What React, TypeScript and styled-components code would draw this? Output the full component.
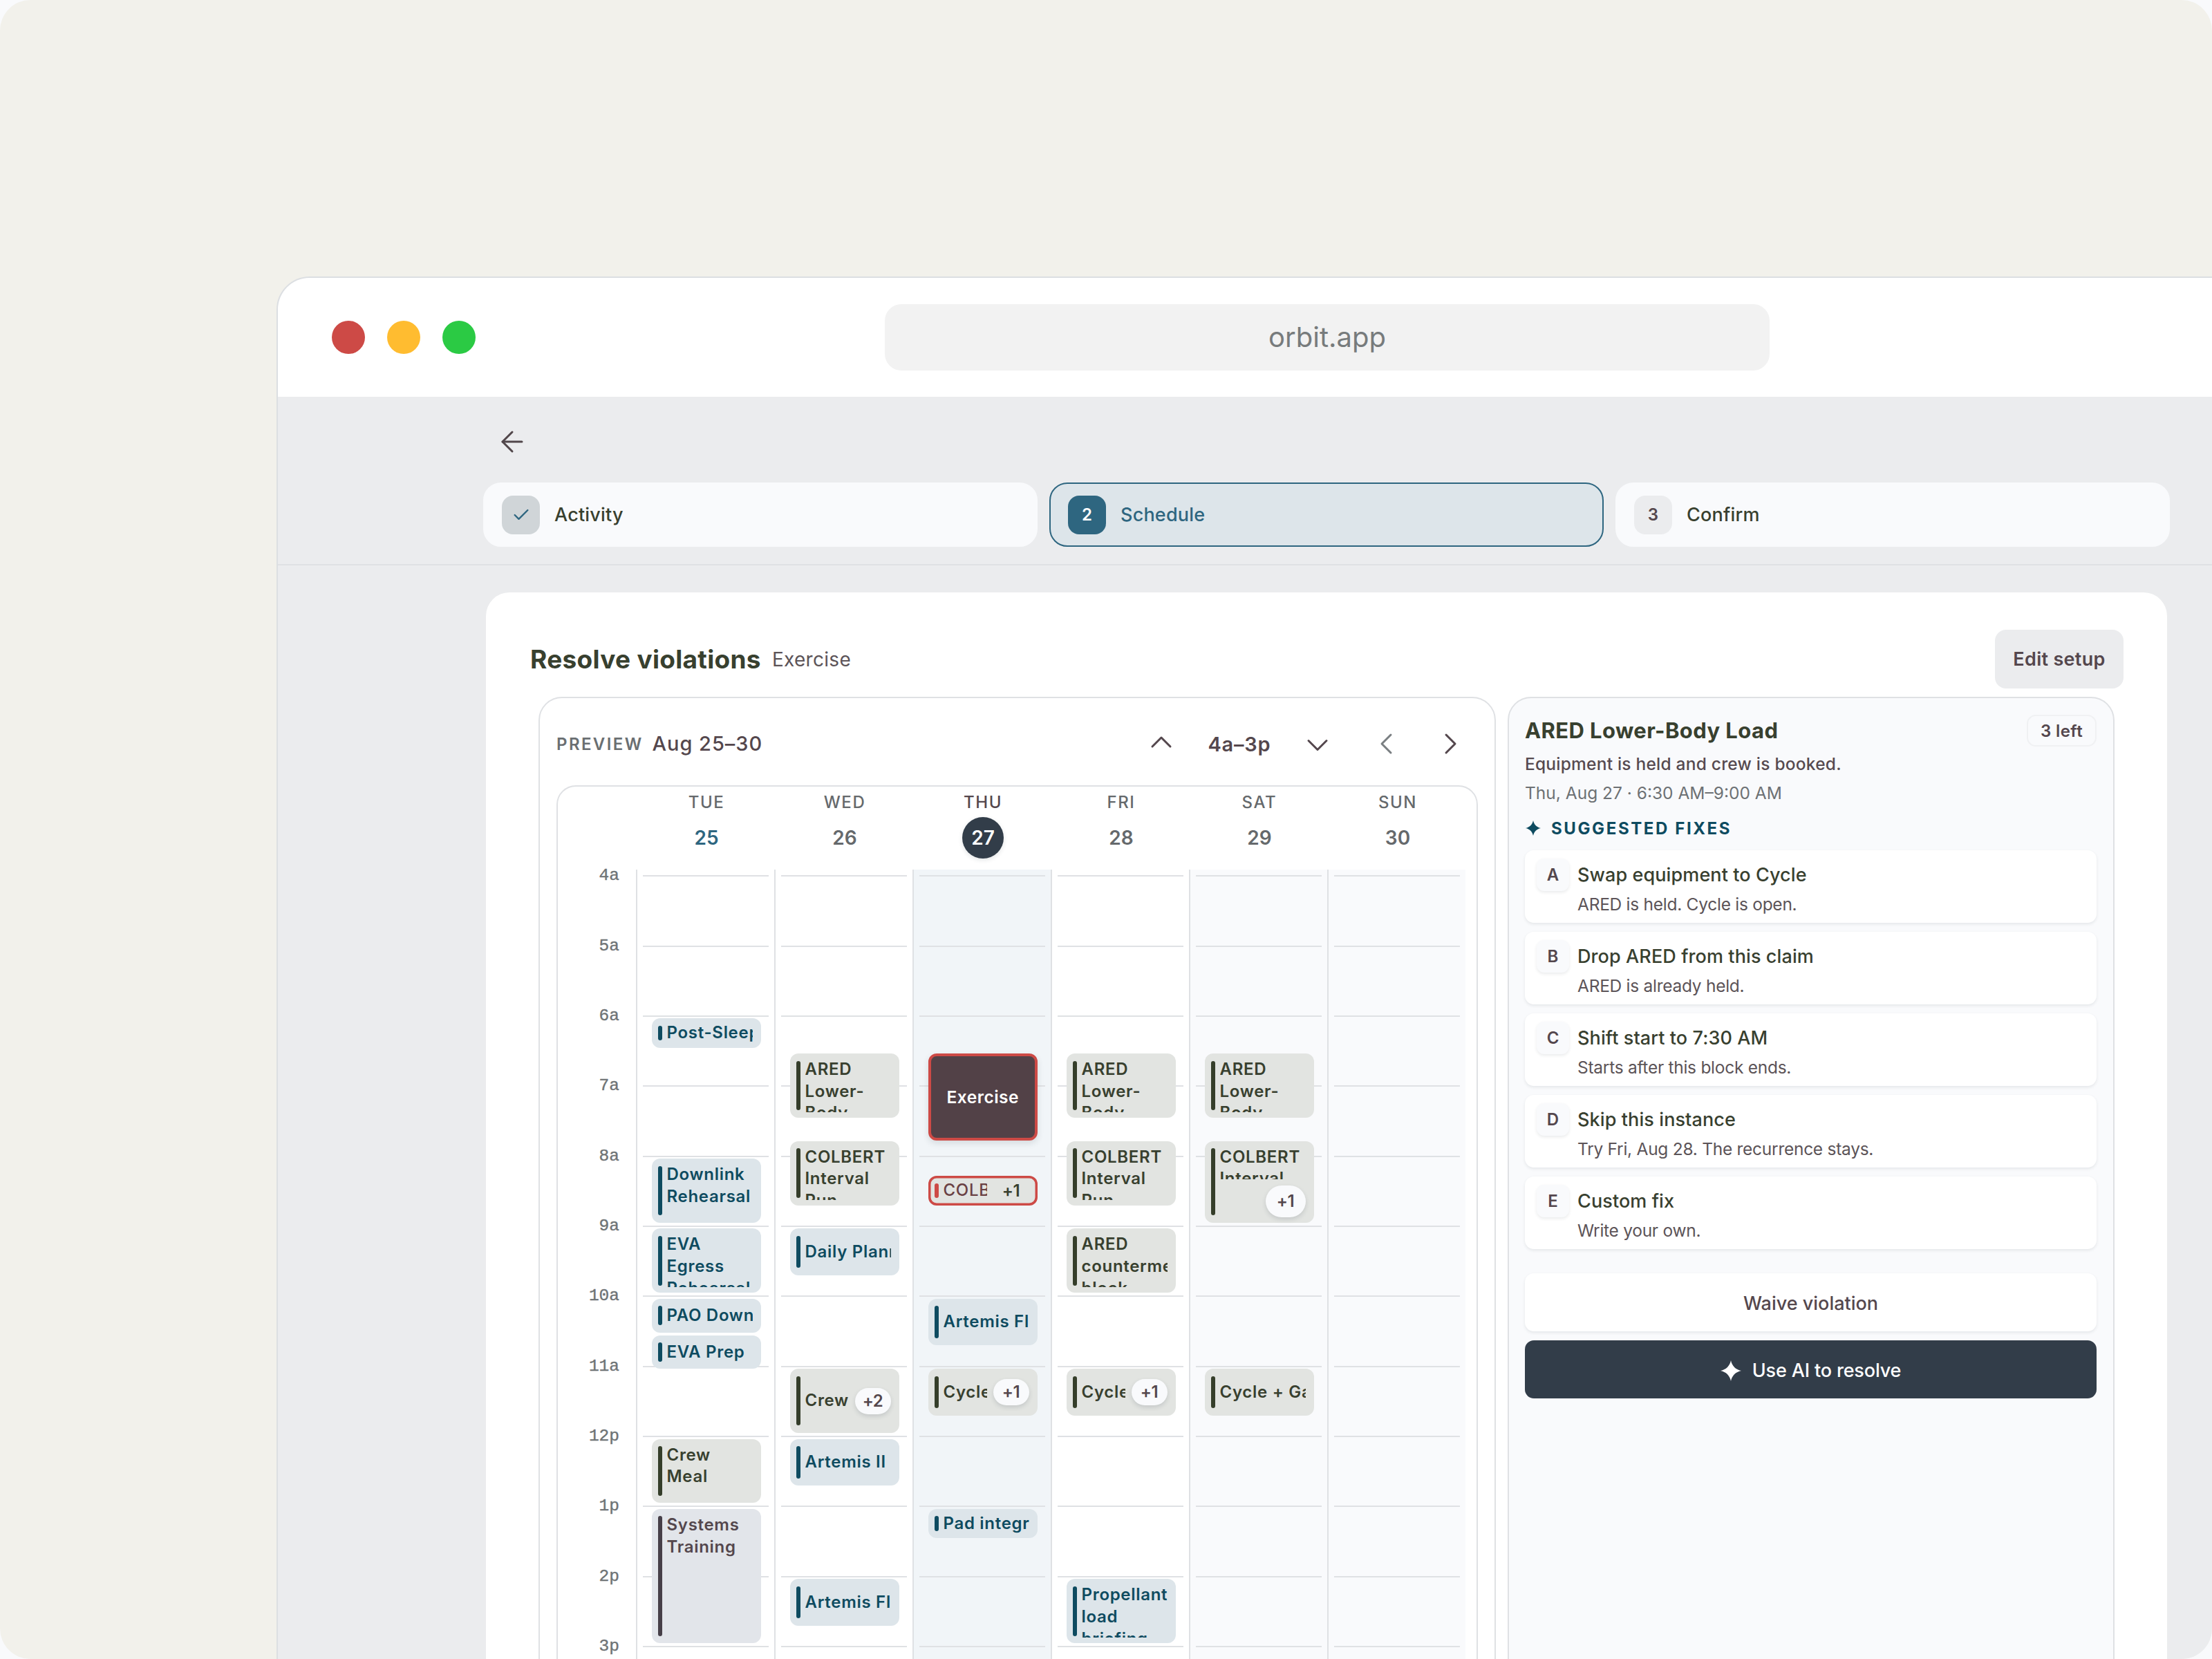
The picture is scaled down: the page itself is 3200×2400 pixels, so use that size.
import { ArrowLeft, Check } from 'lucide-react';
import styled, { createGlobalStyle, css } from 'styled-components';

type Tone = 'blue' | 'green' | 'slate';

interface CalendarEvent {
  title: string;
  start: number;
  duration: number;
  tone: Tone;
  more?: string;
  conflict?: boolean;
  draft?: boolean;
}

interface Day {
  name: string;
  date: number;
  kind?: 'past' | 'active' | 'weekend';
  events: CalendarEvent[];
}

const HOUR_HEIGHT = 101.35;
const FIRST_HOUR = 4;
const GRID_OFFSET = 9.3;

const tones = {
  blue: { bg: '#dde5ea', text: '#0e4b60', bar: '#0e4b60' },
  green: { bg: '#e2e4e1', text: '#38402f', bar: '#353e2a' },
  slate: { bg: '#e2e5ea', text: '#54474d', bar: '#463f48' },
};

const hours = ['4a', '5a', '6a', '7a', '8a', '9a', '10a', '11a', '12p', '1p', '2p', '3p'];

const days: Day[] = [
  {
    name: 'TUE',
    date: 25,
    kind: 'past',
    events: [
      { title: 'Post-Sleep', start: 6, duration: 0.5, tone: 'blue' },
      { title: 'Downlink Rehearsal', start: 8, duration: 1, tone: 'blue' },
      { title: 'EVA Egress Rehearsal', start: 9, duration: 1, tone: 'blue' },
      { title: 'PAO Downlink', start: 10, duration: 0.565, tone: 'blue' },
      { title: 'EVA Prep', start: 10.52, duration: 0.565, tone: 'blue' },
      { title: 'Crew Meal', start: 12, duration: 1, tone: 'green' },
      { title: 'Systems Training', start: 13, duration: 2, tone: 'slate' },
    ],
  },
  {
    name: 'WED',
    date: 26,
    events: [
      { title: 'ARED Lower-Body', start: 6.5, duration: 1, tone: 'green' },
      { title: 'COLBERT Interval Run', start: 7.75, duration: 1, tone: 'green' },
      { title: 'Daily Planning', start: 9, duration: 0.75, tone: 'blue' },
      { title: 'Crew Meal', start: 11, duration: 1, tone: 'green', more: '+2' },
      { title: 'Artemis II', start: 12, duration: 0.75, tone: 'blue' },
      { title: 'Artemis Flight', start: 14, duration: 0.75, tone: 'blue' },
    ],
  },
  {
    name: 'THU',
    date: 27,
    kind: 'active',
    events: [
      { title: 'Exercise', start: 6.5, duration: 1.33, tone: 'slate', draft: true },
      { title: 'COLBERT', start: 8.25, duration: 0.5, tone: 'green', more: '+1', conflict: true },
      { title: 'Artemis Flight', start: 10, duration: 0.75, tone: 'blue' },
      { title: 'Cycle + Gaze', start: 11, duration: 0.75, tone: 'green', more: '+1' },
      { title: 'Pad integration', start: 13, duration: 0.5, tone: 'blue' },
    ],
  },
  {
    name: 'FRI',
    date: 28,
    events: [
      { title: 'ARED Lower-Body', start: 6.5, duration: 1, tone: 'green' },
      { title: 'COLBERT Interval Run', start: 7.75, duration: 1, tone: 'green' },
      { title: 'ARED countermeasure block', start: 9, duration: 1, tone: 'green' },
      { title: 'Cycle + Gaze', start: 11, duration: 0.75, tone: 'green', more: '+1' },
      { title: 'Propellant load briefing', start: 14, duration: 1, tone: 'blue' },
    ],
  },
  {
    name: 'SAT',
    date: 29,
    kind: 'weekend',
    events: [
      { title: 'ARED Lower-Body', start: 6.5, duration: 1, tone: 'green' },
      { title: 'COLBERT Interval', start: 7.75, duration: 1.25, tone: 'green', more: '+1' },
      { title: 'Cycle + Gaze', start: 11, duration: 0.75, tone: 'green' },
    ],
  },
  { name: 'SUN', date: 30, kind: 'weekend', events: [] },
];

const fixes = [
  { id: 'A', title: 'Swap equipment to Cycle', detail: 'ARED is held. Cycle is open.' },
  { id: 'B', title: 'Drop ARED from this claim', detail: 'ARED is already held.' },
  { id: 'C', title: 'Shift start to 7:30 AM', detail: 'Starts after this block ends.' },
  { id: 'D', title: 'Skip this instance', detail: 'Try Fri, Aug 28. The recurrence stays.' },
  { id: 'E', title: 'Custom fix', detail: 'Write your own.' },
];

const chevrons = {
  up: 'M13 30 L26 17 L39 30',
  down: 'M13 21.5 L26 34.5 L39 21.5',
  left: 'M32 13 L19 26 L32 39',
  right: 'M20 13 L33 26 L20 39',
};

const Chevron = ({ direction }: { direction: keyof typeof chevrons }) => (
  <svg width={52} height={52} viewBox="0 0 52 52" fill="none">
    <path
      d={chevrons[direction]}
      stroke="currentColor"
      strokeWidth={3}
      strokeLinecap="round"
      strokeLinejoin="round"
    />
  </svg>
);

const Sparkle = ({ size }: { size: number }) => (
  <svg width={size} height={size} viewBox="0 0 30 30" fill="currentColor">
    <path d="M15 0 C16.6 8 22 13.4 30 15 C22 16.6 16.6 22 15 30 C13.4 22 8 16.6 0 15 C8 13.4 13.4 8 15 0 Z" />
  </svg>
);

const EventBlock = ({ event }: { event: CalendarEvent }) => {
  const position = {
    top: GRID_OFFSET + 3.4 + (event.start - FIRST_HOUR) * HOUR_HEIGHT,
    height: event.duration * HOUR_HEIGHT - 8.5,
  };

  if (event.draft) return <DraftEvent style={position}>{event.title}</DraftEvent>;

  const stacked = !!event.more && event.duration > 1;
  const wrap = event.duration >= 1 && (!event.more || stacked);

  return (
    <EventCard style={position} $tone={event.tone} $conflict={event.conflict}>
      <EventBar $tone={event.tone} $conflict={event.conflict} />
      <EventBody $stacked={stacked}>
        <EventTitle $wrap={wrap}>{event.title}</EventTitle>
        {event.more && (
          <MorePill $large={stacked} $flat={event.conflict}>
            {event.more}
          </MorePill>
        )}
      </EventBody>
    </EventCard>
  );
};

const App = () => (
  <>
    <GlobalStyle />
    <Backdrop>
      <BrowserWindow>
        <TitleBar>
          <TrafficLights>
            <Light $color="#cd4a46" />
            <Light $color="#ffbc30" />
            <Light $color="#2bca44" />
          </TrafficLights>
          <AddressBar>orbit.app</AddressBar>
        </TitleBar>

        <StepsHeader>
          <BackButton>
            <ArrowLeft size={48} strokeWidth={1.5} />
          </BackButton>
          <Steps>
            <Step>
              <StepBadge $state="done">
                <Check size={28} strokeWidth={2} />
              </StepBadge>
              Activity
            </Step>
            <Step $current>
              <StepBadge $state="current">2</StepBadge>
              Schedule
            </Step>
            <Step>
              <StepBadge>3</StepBadge>
              Confirm
            </Step>
          </Steps>
        </StepsHeader>

        <Card>
          <CardHeader>
            <CardTitle>Resolve violations</CardTitle>
            <CardSubtitle>Exercise</CardSubtitle>
            <EditButton>Edit setup</EditButton>
          </CardHeader>
          <Panels>
            <PreviewPanel>
              <Toolbar>
                <PreviewLabel>PREVIEW</PreviewLabel>
                <PreviewRange>Aug 25–30</PreviewRange>
                <IconButton>
                  <Chevron direction="up" />
                </IconButton>
                <HourRange>4a–3p</HourRange>
                <IconButton>
                  <Chevron direction="down" />
                </IconButton>
                <WeekNav>
                  <IconButton $muted>
                    <Chevron direction="left" />
                  </IconButton>
                  <IconButton>
                    <Chevron direction="right" />
                  </IconButton>
                </WeekNav>
              </Toolbar>
              <Calendar>
                <DayNames>
                  {days.map((day) => (
                    <DayHeading key={day.date} $active={day.kind === 'active'}>
                      {day.name}
                      <DayNumber $kind={day.kind}>{day.date}</DayNumber>
                    </DayHeading>
                  ))}
                </DayNames>
                <CalendarBody>
                  <Gutter>
                    {hours.map((hour) => (
                      <HourLabel key={hour}>
                        <span>{hour}</span>
                      </HourLabel>
                    ))}
                  </Gutter>
                  {days.map((day) => (
                    <DayColumn key={day.date} $kind={day.kind}>
                      {hours.map((hour) => (
                        <HourSlot key={hour} />
                      ))}
                      {day.events.map((event) => (
                        <EventBlock key={event.start} event={event} />
                      ))}
                    </DayColumn>
                  ))}
                </CalendarBody>
              </Calendar>
            </PreviewPanel>

            <FixPanel>
              <FixHeader>
                <FixTitle>ARED Lower-Body Load</FixTitle>
                <LeftBadge>3 left</LeftBadge>
              </FixHeader>
              <FixSummary>Equipment is held and crew is booked.</FixSummary>
              <FixTime>Thu, Aug 27 · 6:30 AM–9:00 AM</FixTime>
              <SuggestedLabel>
                <Sparkle size={22} />
                SUGGESTED FIXES
              </SuggestedLabel>
              <FixList>
                {fixes.map((fix) => (
                  <FixOption key={fix.id}>
                    <FixKey>{fix.id}</FixKey>
                    <FixText>
                      <FixName>{fix.title}</FixName>
                      <FixDetail>{fix.detail}</FixDetail>
                    </FixText>
                  </FixOption>
                ))}
              </FixList>
              <Actions>
                <ActionButton>Waive violation</ActionButton>
                <ActionButton $primary>
                  <Sparkle size={30} />
                  Use AI to resolve
                </ActionButton>
              </Actions>
            </FixPanel>
          </Panels>
        </Card>
      </BrowserWindow>
    </Backdrop>
  </>
);

export default App;

const GlobalStyle = createGlobalStyle`
  *, *::before, *::after {
    box-sizing: border-box;
  }
  body {
    margin: 0;
    background: #f9fafc;
    font-family: Inter, 'Liberation Sans', sans-serif;
    overflow: hidden;
  }
  button {
    font-family: inherit;
    border: none;
    padding: 0;
    background: none;
  }
  svg {
    display: block;
    flex-shrink: 0;
  }
`;

const Backdrop = styled.div`
  width: 3200px;
  height: 2400px;
  padding: 400px 0 0 400px;
  border-radius: 44px;
  background: #f2f1eb;
  overflow: hidden;
`;

const BrowserWindow = styled.div`
  width: 2880px;
  height: 2100px;
  border: 2px solid #dcdfe2;
  border-radius: 48px 0 0 0;
  background: #ebecee;
  overflow: hidden;
`;

const TitleBar = styled.div`
  display: flex;
  align-items: center;
  height: 172px;
  padding-left: 78px;
  background: #fff;
`;

const TrafficLights = styled.div`
  display: flex;
  gap: 32px;
  width: 800px;
`;

const Light = styled.span<{ $color: string }>`
  width: 48px;
  height: 48px;
  border-radius: 50%;
  background: ${({ $color }) => $color};
`;

const AddressBar = styled.div`
  display: flex;
  align-items: center;
  justify-content: center;
  width: 1280px;
  height: 96px;
  padding-bottom: 2px;
  border-radius: 24px;
  background: #f2f2f2;
  color: #777b7c;
  font-size: 40px;
`;

const StepsHeader = styled.div`
  height: 244px;
  padding: 41px 0 0 297px;
  border-bottom: 2px solid #dfe1e4;
`;

const BackButton = styled.button`
  display: flex;
  margin-left: 18px;
  color: #51464a;
`;

const Steps = styled.div`
  display: flex;
  gap: 17px;
  margin-top: 35px;
`;

const Step = styled.div<{ $current?: boolean }>`
  display: flex;
  align-items: center;
  gap: 21px;
  width: 802px;
  height: 93px;
  padding-left: 25px;
  border: 2px solid ${({ $current }) => ($current ? '#2e6680' : '#f9fafc')};
  border-radius: 26px;
  background: ${({ $current }) => ($current ? '#dde5ea' : '#f9fafc')};
  color: ${({ $current }) => ($current ? '#2e6680' : '#38402f')};
  font-size: 27px;
  font-weight: 540;
  letter-spacing: 0.2px;
`;

const badgeStates = {
  done: css`
    background: #d0d5d8;
    color: #2e6680;
  `,
  current: css`
    background: #2e6680;
    color: #fff;
  `,
};

const StepBadge = styled.span<{ $state?: keyof typeof badgeStates }>`
  display: flex;
  align-items: center;
  justify-content: center;
  width: 55px;
  height: 56px;
  border-radius: 16px;
  background: #ebecee;
  color: #54474d;
  font-size: 24px;
  font-weight: 600;
  ${({ $state }) => $state && badgeStates[$state]}
`;

const Card = styled.div`
  width: 2432px;
  height: 1700px;
  margin: 39px 0 0 301px;
  padding: 54px 63px 0;
  border-radius: 34px;
  background: #fff;
`;

const CardHeader = styled.div`
  display: flex;
  align-items: center;
  height: 85px;
`;

const CardTitle = styled.h1`
  margin: 0 16px 0 1px;
  color: #38402f;
  font-size: 37px;
  font-weight: 700;
  letter-spacing: 0.3px;
`;

const CardSubtitle = styled.span`
  color: #5c5458;
  font-size: 28px;
  letter-spacing: 0.3px;
`;

const EditButton = styled.button`
  width: 186px;
  height: 85px;
  margin-left: auto;
  border-radius: 16px;
  background: #ebecee;
  color: #54474d;
  font-size: 27px;
  font-weight: 580;
  letter-spacing: 0.3px;
`;

const Panels = styled.div`
  display: flex;
  gap: 17px;
  margin: 12px 0 0 13px;
`;

const PreviewPanel = styled.div`
  width: 1385px;
  height: 1500px;
  padding: 24px;
  border: 2px solid #dfe1e4;
  border-radius: 34px;
`;

const Toolbar = styled.div`
  display: flex;
  align-items: center;
  height: 84px;
`;

const PreviewLabel = styled.span`
  margin: 1px 13px 0 0;
  color: #6a6f72;
  font-size: 24px;
  font-weight: 620;
  letter-spacing: 2.4px;
`;

const PreviewRange = styled.span`
  margin: -1px auto 0 0;
  color: #54474d;
  font-size: 29px;
  font-weight: 550;
  letter-spacing: 0.95px;
`;

const IconButton = styled.button<{ $muted?: boolean }>`
  display: flex;
  align-items: center;
  justify-content: center;
  width: 80px;
  height: 80px;
  color: ${({ $muted }) => ($muted ? '#7a7f82' : '#54474d')};
`;

const HourRange = styled.span`
  width: 146px;
  color: #54474d;
  font-size: 29px;
  font-weight: 580;
  letter-spacing: 0.8px;
  text-align: center;
`;

const WeekNav = styled.div`
  display: flex;
  gap: 12px;
  margin-left: 20px;
`;

const Calendar = styled.div`
  height: 1340px;
  margin-top: 17.5px;
  border: 2px solid #dfe1e4;
  border-radius: 28px;
`;

const DayNames = styled.div`
  display: flex;
  height: 120.5px;
  padding: 8px 0 0 115px;
`;

const DayHeading = styled.div<{ $active?: boolean }>`
  display: flex;
  flex-direction: column;
  align-items: center;
  gap: 6px;
  width: 200px;
  color: ${({ $active }) => ($active ? '#54474d' : '#65696c')};
  font-size: 24px;
  font-weight: 530;
  line-height: 30px;
  letter-spacing: 1.6px;
`;

const DayNumber = styled.span<{ $kind?: Day['kind'] }>`
  display: flex;
  align-items: center;
  justify-content: center;
  width: 60px;
  height: 60px;
  border-radius: 50%;
  color: ${({ $kind }) => ($kind === 'past' ? '#2e6680' : '#65696c')};
  font-size: 28px;
  font-weight: 600;
  letter-spacing: 0;
  ${({ $kind }) =>
    $kind === 'active' &&
    css`
      background: #323d49;
      color: #fff;
      box-shadow: 0 2px 6px rgba(50, 61, 73, 0.14);
    `}
`;

const CalendarBody = styled.div`
  display: flex;
`;

const Gutter = styled.div`
  width: 113px;
  padding: ${GRID_OFFSET}px 24px 0 0;
`;

const HourLabel = styled.div`
  height: ${HOUR_HEIGHT}px;
  color: #6f7476;
  font-family: 'Liberation Mono', monospace;
  font-size: 24.5px;
  line-height: 0;
  text-align: right;
  -webkit-text-stroke: 0.4px #6f7476;
`;

const DayColumn = styled.div<{ $kind?: Day['kind'] }>`
  position: relative;
  width: 200px;
  height: 1220px;
  padding: ${GRID_OFFSET - 1}px 8px 0 8px;
  border-left: 2px solid #dfe1e4;
  background: ${({ $kind }) =>
    $kind === 'active' ? '#f1f5f8' : $kind === 'weekend' ? '#f9fafc' : '#fff'};
`;

const HourSlot = styled.div`
  height: ${HOUR_HEIGHT}px;
  border-top: 2px solid #dfe1e4;
`;

const EventCard = styled.div<{ $tone: Tone; $conflict?: boolean }>`
  position: absolute;
  left: 21px;
  display: flex;
  gap: 7px;
  width: 157.5px;
  padding: 8px 12px 8px 8.5px;
  border-radius: 12px;
  background: ${({ $tone }) => tones[$tone].bg};
  color: ${({ $tone, $conflict }) => ($conflict ? '#6a4144' : tones[$tone].text)};
  font-size: 24px;
  font-weight: 580;
  letter-spacing: 0.7px;
  ${({ $conflict }) =>
    $conflict &&
    css`
      box-shadow: inset 0 0 0 3.5px #cd4a46;
      font-weight: 500;
    `}
`;

const EventBar = styled.span<{ $tone: Tone; $conflict?: boolean }>`
  flex-shrink: 0;
  width: 6px;
  margin: 2.5px 0;
  border-radius: 3px;
  background: ${({ $tone, $conflict }) => ($conflict ? '#cd4a46' : tones[$tone].bar)};
`;

const EventBody = styled.div<{ $stacked: boolean }>`
  display: flex;
  flex: 1;
  min-width: 0;
  flex-direction: ${({ $stacked }) => ($stacked ? 'column' : 'row')};
  align-items: ${({ $stacked }) => ($stacked ? 'stretch' : 'center')};
  gap: 8.5px;
`;

const EventTitle = styled.span<{ $wrap: boolean }>`
  flex: 1;
  min-width: 0;
  min-height: 0;
  margin-top: -1px;
  line-height: 31.7px;
  overflow: hidden;
  white-space: ${({ $wrap }) => ($wrap ? 'normal' : 'nowrap')};
  ${({ $wrap }) =>
    $wrap &&
    css`
      align-self: stretch;
    `}
`;

const MorePill = styled.span<{ $large?: boolean; $flat?: boolean }>`
  display: flex;
  align-items: center;
  justify-content: center;
  flex-shrink: 0;
  align-self: ${({ $large }) => ($large ? 'flex-end' : 'center')};
  width: ${({ $large }) => ($large ? 58 : 52)}px;
  height: ${({ $large }) => ($large ? 46 : 38)}px;
  border-radius: 23px;
  background: ${({ $flat }) => ($flat ? 'transparent' : '#f9fafc')};
  box-shadow: ${({ $flat }) => ($flat ? 'none' : '0 3px 6px rgba(50, 61, 73, 0.16)')};
  color: ${({ $flat }) => ($flat ? '#38402f' : '#54474d')};
  font-size: 24px;
  font-weight: 600;
  letter-spacing: -0.5px;
  ${({ $flat }) =>
    $flat &&
    css`
      height: 26px;
    `}
`;

const DraftEvent = styled.div`
  position: absolute;
  left: 21px;
  display: flex;
  align-items: center;
  justify-content: center;
  width: 157.5px;
  border: 4px solid #cd4a46;
  border-radius: 12px;
  background: #524147;
  box-shadow: 0 4px 10px rgba(50, 61, 73, 0.14);
  color: #fff;
  font-size: 24.5px;
  font-weight: 600;
  letter-spacing: 0.5px;
`;

const FixPanel = styled.div`
  width: 878px;
  height: 1500px;
  padding: 24px 24px 0 23px;
  border: 2px solid #dfe1e4;
  border-radius: 34px;
  background: #f9fafc;
`;

const FixHeader = styled.div`
  display: flex;
  align-items: center;
  justify-content: space-between;
  height: 46px;
`;

const FixTitle = styled.h2`
  margin: -1px 0 0;
  color: #38402f;
  font-size: 31px;
  font-weight: 650;
  letter-spacing: 0.4px;
`;

const LeftBadge = styled.span`
  display: flex;
  align-items: center;
  justify-content: center;
  width: 101px;
  height: 46px;
  border: 2px solid #f0f1f3;
  border-radius: 13px;
  color: #54474d;
  font-size: 24px;
  font-weight: 600;
  letter-spacing: 0.4px;
`;

const FixSummary = styled.p`
  margin: 7px 0 0;
  color: #564a50;
  font-size: 24.5px;
  font-weight: 500;
  line-height: 36px;
  letter-spacing: 0.22px;
`;

const FixTime = styled.p`
  margin: 6px 0 0;
  color: #6d7174;
  font-size: 24.5px;
  line-height: 36px;
`;

const SuggestedLabel = styled.div`
  display: flex;
  align-items: center;
  gap: 15px;
  margin-top: 15px;
  height: 36px;
  padding-left: 1px;
  color: #0e4b60;
  font-size: 24px;
  font-weight: 700;
  letter-spacing: 2.6px;
`;

const FixList = styled.div`
  display: flex;
  flex-direction: column;
  gap: 13px;
  margin-top: 14px;
`;

const FixOption = styled.div`
  display: flex;
  gap: 12px;
  height: 105px;
  padding: 12px 17px;
  border-radius: 13px;
  background: #fff;
  box-shadow: 0 2px 4px rgba(50, 61, 73, 0.1);
`;

const FixKey = styled.span`
  display: flex;
  align-items: center;
  justify-content: center;
  width: 47px;
  height: 47px;
  border-radius: 11px;
  background: #f9fafc;
  box-shadow: 0 2px 4px rgba(50, 61, 73, 0.1);
  color: #54474d;
  font-size: 24px;
  font-weight: 600;
`;

const FixText = styled.div`
  display: flex;
  flex-direction: column;
  gap: 4px;
  padding-top: 4px;
`;

const FixName = styled.span`
  color: #38402f;
  font-size: 27px;
  font-weight: 540;
  line-height: 40px;
  letter-spacing: 0.1px;
`;

const FixDetail = styled.span`
  color: #5c5458;
  font-size: 24.5px;
  line-height: 36px;
  letter-spacing: -0.27px;
`;

const Actions = styled.div`
  display: flex;
  flex-direction: column;
  gap: 13px;
  margin-top: 35px;
`;

const ActionButton = styled.button<{ $primary?: boolean }>`
  display: flex;
  align-items: center;
  justify-content: center;
  gap: 16px;
  height: 84px;
  padding-top: 3px;
  border-radius: 13px;
  background: ${({ $primary }) => ($primary ? '#323d49' : '#fff')};
  box-shadow: ${({ $primary }) => ($primary ? 'none' : '0 2px 4px rgba(50, 61, 73, 0.1)')};
  color: ${({ $primary }) => ($primary ? '#fff' : '#54474d')};
  font-size: 27px;
  font-weight: ${({ $primary }) => ($primary ? 500 : 450)};
  letter-spacing: ${({ $primary }) => ($primary ? -0.15 : 0)}px;
`;
